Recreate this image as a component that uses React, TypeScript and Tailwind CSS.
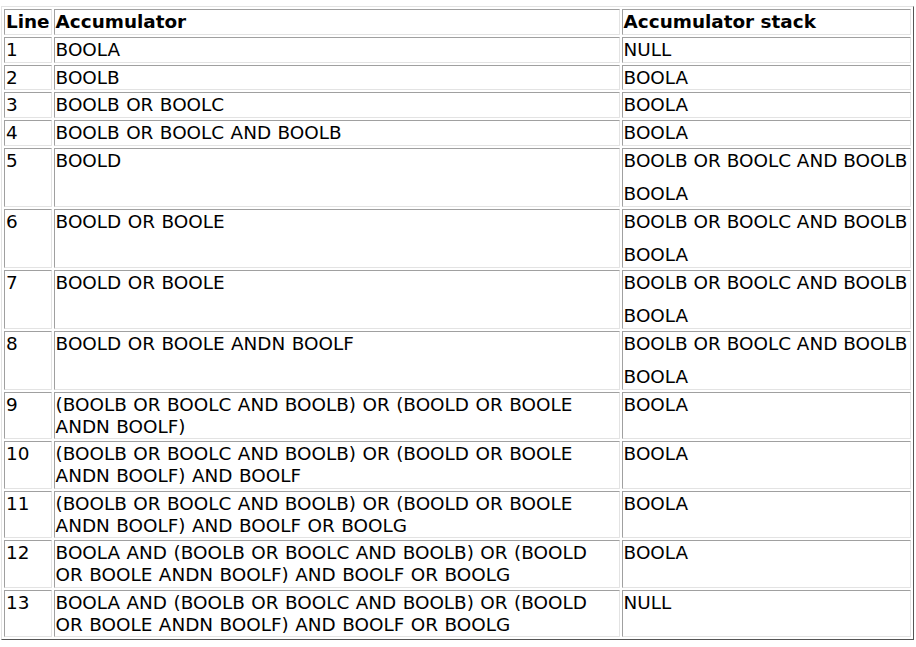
import React from 'react';

interface Row {
  line: string;
  acc: string;
  stack: string[];
}

const rows: Row[] = [
  { line: '1', acc: 'BOOLA', stack: ['NULL'] },
  { line: '2', acc: 'BOOLB', stack: ['BOOLA'] },
  { line: '3', acc: 'BOOLB OR BOOLC', stack: ['BOOLA'] },
  { line: '4', acc: 'BOOLB OR BOOLC AND BOOLB', stack: ['BOOLA'] },
  { line: '5', acc: 'BOOLD', stack: ['BOOLB OR BOOLC AND BOOLB', 'BOOLA'] },
  { line: '6', acc: 'BOOLD OR BOOLE', stack: ['BOOLB OR BOOLC AND BOOLB', 'BOOLA'] },
  { line: '7', acc: 'BOOLD OR BOOLE', stack: ['BOOLB OR BOOLC AND BOOLB', 'BOOLA'] },
  { line: '8', acc: 'BOOLD OR BOOLE ANDN BOOLF', stack: ['BOOLB OR BOOLC AND BOOLB', 'BOOLA'] },
  { line: '9', acc: '(BOOLB OR BOOLC AND BOOLB) OR (BOOLD OR BOOLE ANDN BOOLF)', stack: ['BOOLA'] },
  { line: '10', acc: '(BOOLB OR BOOLC AND BOOLB) OR (BOOLD OR BOOLE ANDN BOOLF) AND BOOLF', stack: ['BOOLA'] },
  { line: '11', acc: '(BOOLB OR BOOLC AND BOOLB) OR (BOOLD OR BOOLE ANDN BOOLF) AND BOOLF OR BOOLG', stack: ['BOOLA'] },
  { line: '12', acc: 'BOOLA AND (BOOLB OR BOOLC AND BOOLB) OR (BOOLD OR BOOLE ANDN BOOLF) AND BOOLF OR BOOLG', stack: ['BOOLA'] },
  { line: '13', acc: 'BOOLA AND (BOOLB OR BOOLC AND BOOLB) OR (BOOLD OR BOOLE ANDN BOOLF) AND BOOLF OR BOOLG', stack: ['NULL'] },
];

const cell =
  'border border-t-[#a0a0a0] border-l-[#a0a0a0] border-b-[#e3e3e3] border-r-[#e3e3e3] p-px align-top text-left';

export default function App() {
  return (
    <div className="min-h-screen bg-white pl-[1px] pt-[6px] font-['DejaVu_Sans',Verdana,sans-serif] text-[18.4px] leading-[21.75px] text-black">
      <table className="table-fixed border-separate border-spacing-[2px] border border-t-[#e3e3e3] border-l-[#e3e3e3] border-b-[#555555] border-r-[#555555]">
        <thead>
          <tr>
            <th className={`${cell} w-[47px] font-bold`}>Line</th>
            <th className={`${cell} w-[566px] font-bold`}>Accumulator</th>
            <th className={`${cell} w-[289px] font-bold`}>Accumulator stack</th>
          </tr>
        </thead>
        <tbody>
          {rows.map((row) => (
            <tr key={row.line}>
              <td className={cell}>{row.line}</td>
              <td className={`${cell} [word-spacing:0.6px]`}>{row.acc}</td>
              <td className={cell}>
                {row.stack.map((s, i) => (
                  <div key={i} className={`whitespace-nowrap ${i > 0 ? 'mt-[11.5px]' : ''}`}>
                    {s}
                  </div>
                ))}
              </td>
            </tr>
          ))}
        </tbody>
      </table>
    </div>
  );
}
